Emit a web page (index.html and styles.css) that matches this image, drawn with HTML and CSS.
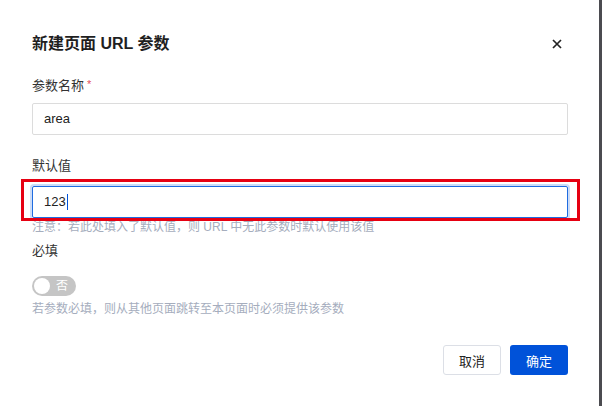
FILE: index.html
```html
<!DOCTYPE html>
<html lang="zh">
<head>
<meta charset="utf-8">
<link rel="stylesheet" href="styles.css">
</head>
<body>
<div class="screen">
  <div class="dialog">
    <div class="header">
      <div class="title">新建页面 URL 参数</div>
      <svg class="close" width="10" height="10" viewBox="0 0 10 10"><path d="M1 1L9 9M9 1L1 9" stroke="#222" stroke-width="1.7" fill="none"/></svg>
    </div>
    <div class="field f1">
      <div class="label">参数名称<span class="req">*</span></div>
      <div class="input">area</div>
    </div>
    <div class="field f2">
      <div class="label">默认值</div>
      <div class="input-wrap">
        <div class="input focus">123<span class="caret"></span></div>
        <div class="annot"></div>
      </div>
      <div class="help">注意：若此处填入了默认值，则 URL 中无此参数时默认使用该值</div>
    </div>
    <div class="field f3">
      <div class="label">必填</div>
      <div class="switch"><span class="knob"></span><span class="sw-text">否</span></div>
      <div class="help h2">若参数必填，则从其他页面跳转至本页面时必须提供该参数</div>
    </div>
    <div class="footer">
      <div class="btn cancel">取消</div>
      <div class="btn ok">确定</div>
    </div>
  </div>
  <div class="strip"></div>
</div>
</body>
</html>
```
FILE: styles.css
```css
* { box-sizing: border-box; }
html, body { margin: 0; padding: 0; background: #fff; }
body {
  font-family: "Liberation Sans", "Noto Sans CJK SC", sans-serif;
  color: #333;
  font-size: 13px;
}
.screen { display: flex; width: 602px; height: 406px; }
.dialog { flex: 1; background: #fff; padding: 32px 31px 0 32px; }
.strip { width: 3px; background: #4b4b50; }
.header { display: flex; align-items: center; justify-content: space-between; height: 24px; }
.title { font-size: 16px; font-weight: bold; color: #1f1f1f; line-height: 24px; }
.close { margin-right: 6px; }
.label { line-height: 20px; font-size: 13px; color: #333; }
.req { color: #e34d59; font-size: 11px; margin-left: 3px; position: relative; top: -2px; }
.f1 { margin-top: 20px; }
.f1 .input { margin-top: 7px; }
.input {
  height: 32px;
  border: 1px solid #dcdcdc;
  border-radius: 2px;
  padding: 0 11px;
  line-height: 30px;
  font-size: 13px;
  color: #222;
  display: flex;
  align-items: center;
}
.f2 { margin-top: 21px; }
.input-wrap { position: relative; margin-top: 10px; }
.input.focus { border-color: #1f6ce0; box-shadow: 0 0 0 2px rgba(0, 82, 217, 0.2); }
.caret { display: inline-block; width: 1px; height: 16px; background: #0052d9; margin-left: 1px; }
.annot {
  position: absolute;
  left: -11px;
  top: -7px;
  width: 559px;
  height: 42px;
  border: 3px solid #e60012;
  pointer-events: none;
}
.help { font-size: 12px; line-height: 18px; color: #a5adbd; }
.f3 { margin-top: 5px; }
.switch {
  margin-top: 15px;
  width: 44px;
  height: 20px;
  border-radius: 10px;
  background: #c5c5c5;
  display: flex;
  align-items: center;
  padding: 0 2px;
}
.knob { width: 16px; height: 16px; border-radius: 50%; background: #fff; }
.sw-text { color: #fff; font-size: 12px; margin-left: 6px; line-height: 20px; }
.h2 { margin-top: 4px; }
.footer { display: flex; justify-content: flex-end; gap: 9px; margin-top: 27px; }
.btn {
  width: 58px;
  height: 30px;
  border-radius: 3px;
  font-size: 13px;
  display: flex;
  align-items: center;
  justify-content: center;
}
.cancel { border: 1px solid #dcdfe6; color: #222; background: #fff; }
.ok { background: #0052d9; color: #fff; }
```
